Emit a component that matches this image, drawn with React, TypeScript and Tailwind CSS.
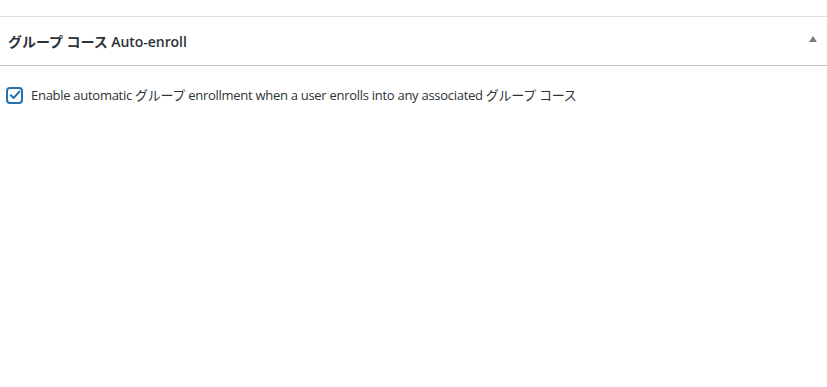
import React from 'react';

const App: React.FC = () => {
  const [checked, setChecked] = React.useState(true);

  return (
    <div
      className="w-[827px] h-[387px] bg-white text-[#1d2327]"
      style={{ fontFamily: '"Open Sans", "Noto Sans CJK JP", sans-serif' }}
    >
      <div className="h-[16px]" />
      {/* Postbox */}
      <div className="border-t border-[#dcdcde]">
        <div className="h-[49px] flex items-center justify-between pl-[8px] pr-[10px] pt-[2px] border-b border-[#c3c4c7]">
          <h2 className="text-[14px] font-semibold leading-none tracking-[-0.05px] text-[#2c3338]">
            グループ コース Auto-enroll
          </h2>
          <span className="w-0 h-0 border-l-[4px] border-r-[4px] border-b-[6px] border-l-transparent border-r-transparent border-b-[#787c82] mb-[7px]" />
        </div>

        {/* Inside */}
        <div className="pt-[19px] pl-[6px]">
          <label className="flex items-center gap-[8px] text-[13px] leading-[20px] tracking-[-0.28px] text-[#2c3338] cursor-pointer">
            <span
              onClick={() => setChecked(!checked)}
              className="w-[17px] h-[17px] rounded-[4px] border-2 border-[#2271b1] flex items-center justify-center"
            >
              {checked && (
                <svg viewBox="0 0 12 12" className="w-[12px] h-[12px]">
                  <path d="M1.8 6.2 L4.6 9 L10.4 2.6" fill="none" stroke="#2271b1" strokeWidth="2" strokeLinecap="round" strokeLinejoin="round" />
                </svg>
              )}
            </span>
            <span>Enable automatic グループ enrollment when a user enrolls into any associated グループ コース</span>
          </label>
        </div>
      </div>
    </div>
  );
};

export default App;
